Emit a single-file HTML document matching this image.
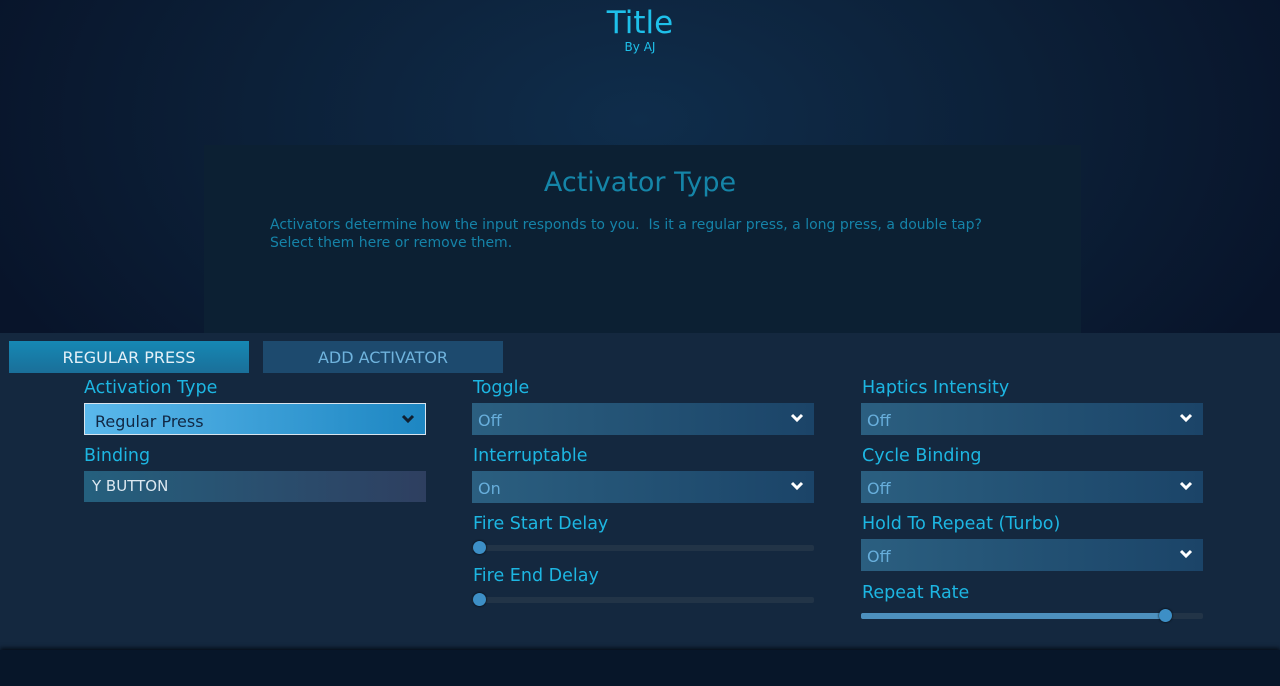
<!DOCTYPE html>
<html><head><meta charset="utf-8"><style>
*{margin:0;padding:0;box-sizing:border-box}
body{width:1280px;height:686px;overflow:hidden;font-family:"DejaVu Sans","Liberation Sans",sans-serif;background:radial-gradient(ellipse 700px 420px at 640px 120px,#0f2d4b 0%,#0c2038 55%,#08142a 100%);position:relative}
.t{position:absolute;left:0;width:1280px;text-align:center;color:#1ec0ea}
.panel{position:absolute;left:204px;top:145px;width:877px;height:190px;background:#0c2033}
.bot{position:absolute;left:0;top:333px;width:1280px;height:317px;background:#14283f}
.foot{position:absolute;left:0;top:650px;width:1280px;height:36px;background:#071629;box-shadow:0 -2px 4px #050d18}
.tab{position:absolute;top:341px;height:32px;width:240px;text-align:center;font-size:16px;line-height:34px}
.lbl{position:absolute;font-size:17.5px;color:#1db6e2}
.dd{position:absolute;width:342px;height:32px;background:linear-gradient(90deg,#2b5f80,#1b4468);font-size:16px;color:#67aedb;line-height:36px;padding-left:6px}
.dd svg{position:absolute;right:10px;top:10px}
.sl{position:absolute;width:342px;height:6px;background:#223447;border-radius:2px}
.kn{position:absolute;width:13px;height:13px;border-radius:50%;background:#3d8fc6;top:-4px;box-shadow:0 0 2px #000}
</style></head><body>
<div class="t" style="top:5px;font-size:31px">Title</div>
<div class="t" style="top:40px;font-size:12px">By AJ</div>
<div class="panel"></div>
<div class="t" style="top:167px;font-size:27px;color:#1585a8">Activator Type</div>
<div style="position:absolute;left:270px;top:216px;font-size:14px;line-height:18px;color:#1583a8;white-space:nowrap">Activators determine how the input responds to you.&nbsp; Is it a regular press, a long press, a double tap?<br>Select them here or remove them.</div>
<div class="bot"></div>
<div class="foot"></div>
<div class="tab" style="left:9px;background:linear-gradient(#1688b4,#1a6f99);color:#e4f0f8">REGULAR PRESS</div>
<div class="tab" style="left:263px;background:#1d4a6e;color:#6fb3dd">ADD ACTIVATOR</div>

<div class="lbl" style="left:84px;top:378px">Activation Type</div>
<div class="dd" style="left:84px;top:403px;background:linear-gradient(90deg,#5ab8ec,#1d86c2);border:1px solid #d8e4ee;color:#112844;padding-left:10px">Regular Press<svg width="14" height="10"><path d="M2 2L7 7L12 2" stroke="#102030" stroke-width="3" fill="none"/></svg></div>
<div class="lbl" style="left:84px;top:446px">Binding</div>
<div class="dd" style="left:84px;top:471px;height:31px;background:linear-gradient(90deg,#25607e,#2e3f60);color:#dce8f0;line-height:31px;padding-left:8px;font-size:15px">Y BUTTON</div>

<div class="lbl" style="left:473px;top:378px">Toggle</div>
<div class="dd" style="left:472px;top:403px">Off<svg width="14" height="10"><path d="M2 2L7 7L12 2" stroke="#fff" stroke-width="3" fill="none"/></svg></div>
<div class="lbl" style="left:473px;top:446px">Interruptable</div>
<div class="dd" style="left:472px;top:471px">On<svg width="14" height="10"><path d="M2 2L7 7L12 2" stroke="#fff" stroke-width="3" fill="none"/></svg></div>
<div class="lbl" style="left:473px;top:514px">Fire Start Delay</div>
<div class="sl" style="left:472px;top:545px"><div class="kn" style="left:1px"></div></div>
<div class="lbl" style="left:473px;top:566px">Fire End Delay</div>
<div class="sl" style="left:472px;top:597px"><div class="kn" style="left:1px"></div></div>

<div class="lbl" style="left:862px;top:378px">Haptics Intensity</div>
<div class="dd" style="left:861px;top:403px">Off<svg width="14" height="10"><path d="M2 2L7 7L12 2" stroke="#fff" stroke-width="3" fill="none"/></svg></div>
<div class="lbl" style="left:862px;top:446px">Cycle Binding</div>
<div class="dd" style="left:861px;top:471px">Off<svg width="14" height="10"><path d="M2 2L7 7L12 2" stroke="#fff" stroke-width="3" fill="none"/></svg></div>
<div class="lbl" style="left:862px;top:514px">Hold To Repeat (Turbo)</div>
<div class="dd" style="left:861px;top:539px">Off<svg width="14" height="10"><path d="M2 2L7 7L12 2" stroke="#fff" stroke-width="3" fill="none"/></svg></div>
<div class="lbl" style="left:862px;top:583px">Repeat Rate</div>
<div class="sl" style="left:861px;top:613px"><div style="width:302px;height:6px;background:#4d90be;border-radius:2px"></div><div class="kn" style="left:298px"></div></div>
</body></html>
